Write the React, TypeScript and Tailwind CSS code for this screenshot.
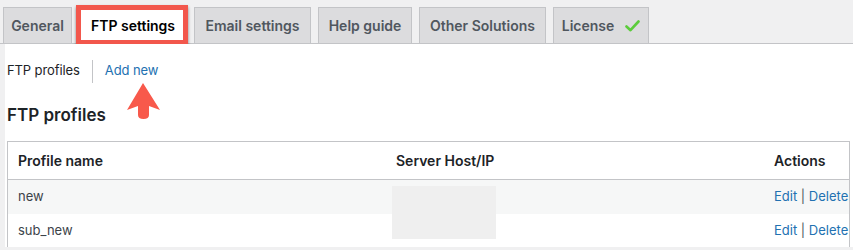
import React from "react";

const font = { fontFamily: "Inter, 'Noto Sans', sans-serif" };

function Tab({ label, w, children }: { label: string; w: string; children?: React.ReactNode }) {
  return (
    <div
      className={`${w} h-[36px] flex items-center justify-center gap-[11px] border border-[#c3c4c7] border-b-0 bg-[#dcdcde] text-[14px] font-semibold text-[#50575e]`}
    >
      <span>{label}</span>
      {children}
    </div>
  );
}

export default function App() {
  return (
    <div className="w-[853px] h-[250px] bg-[#f0f0f1] overflow-hidden" style={font}>
      {/* Tabs */}
      <div className="flex items-end gap-[7px] pt-[8px] pl-[3px] border-b border-[#c3c4c7] h-[44px]">
        <Tab label="General" w="w-[69px]" />
        <div className="relative w-[108px] h-[37px] -mb-px bg-white flex items-center justify-center text-[14px] font-semibold text-black">
          <span className="relative z-10 -mt-[1px]">FTP settings</span>
          <div className="absolute -left-[3px] -right-[1px] -top-[2px] -bottom-[1px] border-[5px] border-[#f2574c] shadow-[0_2px_3px_rgba(0,0,0,0.45)]" />
        </div>
        <Tab label="Email settings" w="w-[117px]" />
        <Tab label="Help guide" w="w-[94px]" />
        <Tab label="Other Solutions" w="w-[127px]" />
        <Tab label="License" w="w-[96px]">
          <svg width="15" height="12" viewBox="0 0 15 12" className="mt-[1px]">
            <path d="M1.5 6.5 L5.5 10.2 L13.5 1.5" fill="none" stroke="#5bcc3b" strokeWidth="2.6" strokeLinecap="round" strokeLinejoin="round" />
          </svg>
        </Tab>
      </div>

      {/* Panel */}
      <div className="ml-[5px] bg-white h-[203px] relative">
        {/* Subnav */}
        <div className="flex items-center h-[54px] text-[13px] tracking-[-0.1px]">
          <span className="pl-[2px] text-[#1d2327]">FTP profiles</span>
          <span className="mx-[12px] w-px h-[23px] bg-[#c3c4c7]" />
          <span className="text-[#2271b1]">Add new</span>
        </div>

        {/* Arrow annotation */}
        <svg className="absolute left-[121px] top-[38px]" width="36" height="38" viewBox="0 0 36 38">
          <path
            d="M17 1 L34 28 L23 24 L23 33 Q23 37 17.5 37 Q12 37 12 33 L12 24 L1 28 Z"
            fill="#f8594b"
          />
        </svg>

        {/* Heading */}
        <h2 className="pl-[2px] mt-[5px] text-[17px] leading-[24px] font-semibold text-[#1d2327]">FTP profiles</h2>

        {/* Table */}
        <div className="absolute left-[2px] top-[97px] w-[843px] border border-[#c3c4c7] border-b-0 text-[13px]">
          <div className="grid grid-cols-[378px_378px_1fr] h-[38px] items-center border-b border-[#c3c4c7] text-[14px] font-semibold text-[#1d2327]">
            <span className="pl-[10px]">Profile name</span>
            <span className="pl-[10px]">Server Host/IP</span>
            <span className="pl-[10px]">Actions</span>
          </div>
          <div className="grid grid-cols-[378px_378px_1fr] h-[34px] items-center bg-[#f6f7f7] text-[#3c434a]">
            <span className="pl-[10px]">new</span>
            <span />
            <span className="pl-[10px] text-[#2271b1]">
              Edit <span className="text-[#50575e]">|</span> Delete
            </span>
          </div>
          <div className="grid grid-cols-[378px_378px_1fr] h-[33px] items-center text-[#3c434a]">
            <span className="pl-[10px]">sub_new</span>
            <span />
            <span className="pl-[10px] text-[#2271b1]">
              Edit <span className="text-[#50575e]">|</span> Delete
            </span>
          </div>
          {/* Redacted area */}
          <div className="absolute left-[384px] top-[44px] w-[104px] h-[53px] bg-[#efefef]" />
        </div>
      </div>
    </div>
  );
}
